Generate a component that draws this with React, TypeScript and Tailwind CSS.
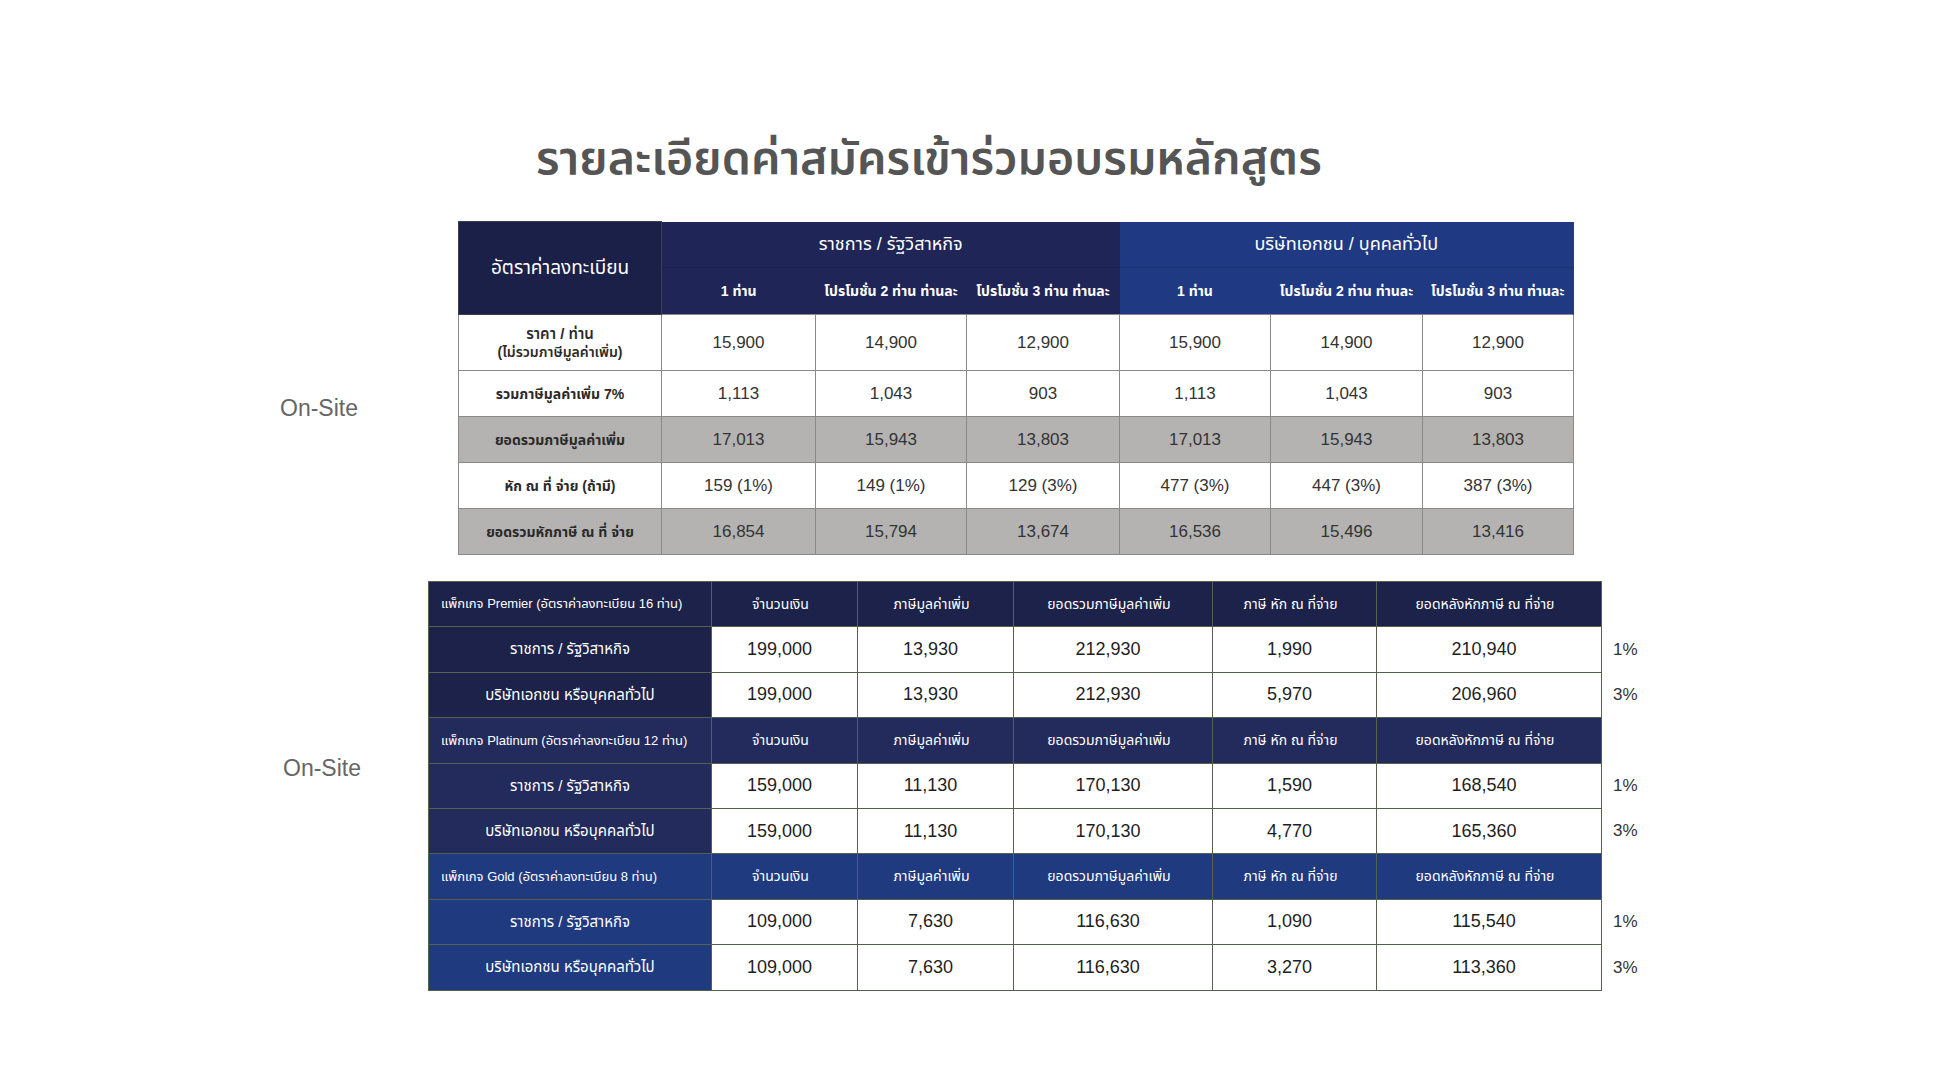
const thai = "font-['Liberation_Sans','Noto_Sans_Thai','Noto_Sans',sans-serif]";

type Col = { one: string; two: string; three: string };

const topRows = [
  {
    label: (
      <div className="leading-[18px] font-semibold">
        <div className="text-[15px]">ราคา / ท่าน</div>
        <div className="text-[14px]">(ไม่รวมภาษีมูลค่าเพิ่ม)</div>
      </div>
    ),
    values: ["15,900", "14,900", "12,900", "15,900", "14,900", "12,900"],
    gray: false,
    h: "h-[56px]",
  },
  {
    label: <span className="text-[14px] font-bold">รวมภาษีมูลค่าเพิ่ม 7%</span>,
    values: ["1,113", "1,043", "903", "1,113", "1,043", "903"],
    gray: false,
    h: "h-[46px]",
  },
  {
    label: <span className="text-[14px] font-bold">ยอดรวมภาษีมูลค่าเพิ่ม</span>,
    values: ["17,013", "15,943", "13,803", "17,013", "15,943", "13,803"],
    gray: true,
    h: "h-[46px]",
  },
  {
    label: <span className="text-[14px] font-bold">หัก ณ ที่ จ่าย (ถ้ามี)</span>,
    values: ["159 (1%)", "149 (1%)", "129 (3%)", "477 (3%)", "447 (3%)", "387 (3%)"],
    gray: false,
    h: "h-[46px]",
  },
  {
    label: <span className="text-[14px] font-bold">ยอดรวมหักภาษี ณ ที่ จ่าย</span>,
    values: ["16,854", "15,794", "13,674", "16,536", "15,496", "13,416"],
    gray: true,
    h: "h-[46px]",
  },
];

const subHeads: Col = {
  one: "1 ท่าน",
  two: "โปรโมชั่น 2 ท่าน ท่านละ",
  three: "โปรโมชั่น 3 ท่าน ท่านละ",
};

function TopTable() {
  return (
    <table className={`w-[1115px] table-fixed border-collapse ${thai}`}>
      <colgroup>
        <col className="w-[203px]" />
        <col className="w-[154px]" />
        <col className="w-[151px]" />
        <col className="w-[153px]" />
        <col className="w-[151px]" />
        <col className="w-[152px]" />
        <col className="w-[151px]" />
      </colgroup>
      <thead>
        <tr className="h-[46px]">
          <th
            rowSpan={2}
            className="bg-[#1b2049] text-white text-[19px] font-normal border border-[#3a3f55]"
          >
            อัตราค่าลงทะเบียน
          </th>
          <th
            colSpan={3}
            className="bg-[#1f2557] text-white text-[18px] font-normal border-b border-[#1a2050]"
          >
            ราชการ / รัฐวิสาหกิจ
          </th>
          <th
            colSpan={3}
            className="bg-[#1f3a82] text-white text-[18px] font-normal border-b border-[#1b3272] border-r border-r-[#3a3f55]"
          >
            บริษัทเอกชน / บุคคลทั่วไป
          </th>
        </tr>
        <tr className="h-[47px]">
          {[subHeads.one, subHeads.two, subHeads.three].map((t, i) => (
            <th key={`a${i}`} className="bg-[#1f2557] text-white text-[14px] font-bold whitespace-nowrap">
              {t}
            </th>
          ))}
          {[subHeads.one, subHeads.two, subHeads.three].map((t, i) => (
            <th
              key={`b${i}`}
              className="bg-[#1f3a82] text-white text-[14px] font-bold whitespace-nowrap last:border-r last:border-r-[#3a3f55]"
            >
              {t}
            </th>
          ))}
        </tr>
      </thead>
      <tbody>
        {topRows.map((r, i) => (
          <tr key={i} className={`${r.h} ${r.gray ? "bg-[#b4b3b1]" : "bg-white"}`}>
            <td className="border border-[#8a8a8a] text-center text-[#2a2a2a]">{r.label}</td>
            {r.values.map((v, j) => (
              <td
                key={j}
                className="border border-[#8a8a8a] text-center text-[17px] text-[#333333] font-['Liberation_Sans',sans-serif]"
              >
                {v}
              </td>
            ))}
          </tr>
        ))}
      </tbody>
    </table>
  );
}

const heads = ["จำนวนเงิน", "ภาษีมูลค่าเพิ่ม", "ยอดรวมภาษีมูลค่าเพิ่ม", "ภาษี หัก ณ ที่จ่าย", "ยอดหลังหักภาษี ณ ที่จ่าย"];

const packages = [
  {
    name: "แพ็กเกจ Premier (อัตราค่าลงทะเบียน 16 ท่าน)",
    bg: "bg-[#1c2249]",
    rows: [
      { who: "ราชการ / รัฐวิสาหกิจ", v: ["199,000", "13,930", "212,930", "1,990", "210,940"], pct: "1%" },
      { who: "บริษัทเอกชน หรือบุคคลทั่วไป", v: ["199,000", "13,930", "212,930", "5,970", "206,960"], pct: "3%" },
    ],
  },
  {
    name: "แพ็กเกจ Platinum (อัตราค่าลงทะเบียน 12 ท่าน)",
    bg: "bg-[#232b5c]",
    rows: [
      { who: "ราชการ / รัฐวิสาหกิจ", v: ["159,000", "11,130", "170,130", "1,590", "168,540"], pct: "1%" },
      { who: "บริษัทเอกชน หรือบุคคลทั่วไป", v: ["159,000", "11,130", "170,130", "4,770", "165,360"], pct: "3%" },
    ],
  },
  {
    name: "แพ็กเกจ Gold (อัตราค่าลงทะเบียน 8 ท่าน)",
    bg: "bg-[#203a7f]",
    rows: [
      { who: "ราชการ / รัฐวิสาหกิจ", v: ["109,000", "7,630", "116,630", "1,090", "115,540"], pct: "1%" },
      { who: "บริษัทเอกชน หรือบุคคลทั่วไป", v: ["109,000", "7,630", "116,630", "3,270", "113,360"], pct: "3%" },
    ],
  },
];

function PackageTable() {
  const line = "border border-[#56604f]";
  return (
    <table className={`table-fixed border-collapse ${thai}`}>
      <colgroup>
        <col className="w-[283px]" />
        <col className="w-[146px]" />
        <col className="w-[156px]" />
        <col className="w-[199px]" />
        <col className="w-[164px]" />
        <col className="w-[225px]" />
        <col className="w-[50px]" />
      </colgroup>
      <tbody>
        {packages.map((p) => (
          <>
            <tr key={p.name} className="h-[45.4px]">
              <td className={`${p.bg} ${line} text-white text-[13px] font-normal pl-[12px] whitespace-nowrap`}>
                {p.name}
              </td>
              {heads.map((h) => (
                <td key={h} className={`${p.bg} ${line} text-white text-[14px] text-center pr-[8px] whitespace-nowrap`}>
                  {h}
                </td>
              ))}
              <td className="border-0 bg-white" />
            </tr>
            {p.rows.map((r) => (
              <tr key={p.name + r.who} className="h-[45.4px]">
                <td className={`${p.bg} ${line} text-white text-[15px] text-center`}>{r.who}</td>
                {r.v.map((v, j) => (
                  <td
                    key={j}
                    className={`bg-white ${line} text-center pr-[10px] text-[18px] text-[#1e1e1e] font-['Liberation_Sans',sans-serif]`}
                  >
                    {v}
                  </td>
                ))}
                <td className="border-0 bg-white pl-[11px] text-[17px] text-[#333333] font-['Liberation_Sans',sans-serif]">
                  {r.pct}
                </td>
              </tr>
            ))}
          </>
        ))}
      </tbody>
    </table>
  );
}

export default function App() {
  return (
    <div className="w-[1945px] h-[1090px] bg-white overflow-hidden">
      <h1
        className={`pt-[128px] pl-[536px] text-[46.5px] leading-[60px] font-semibold text-[#555555] ${thai}`}
      >
        รายละเอียดค่าสมัครเข้าร่วมอบรมหลักสูตร
      </h1>
      <div className="mt-[33px] pl-[280px] flex">
        <div className="w-[178px] pt-[171px] text-[23px] leading-[32px] text-[#666666] font-['Liberation_Sans',sans-serif]">
          On-Site
        </div>
        <TopTable />
      </div>
      <div className="mt-[26px] pl-[280px] flex">
        <div className="w-[148px] pt-[171px] pl-[3px] text-[23px] leading-[32px] text-[#666666] font-['Liberation_Sans',sans-serif]">
          On-Site
        </div>
        <PackageTable />
      </div>
    </div>
  );
}
